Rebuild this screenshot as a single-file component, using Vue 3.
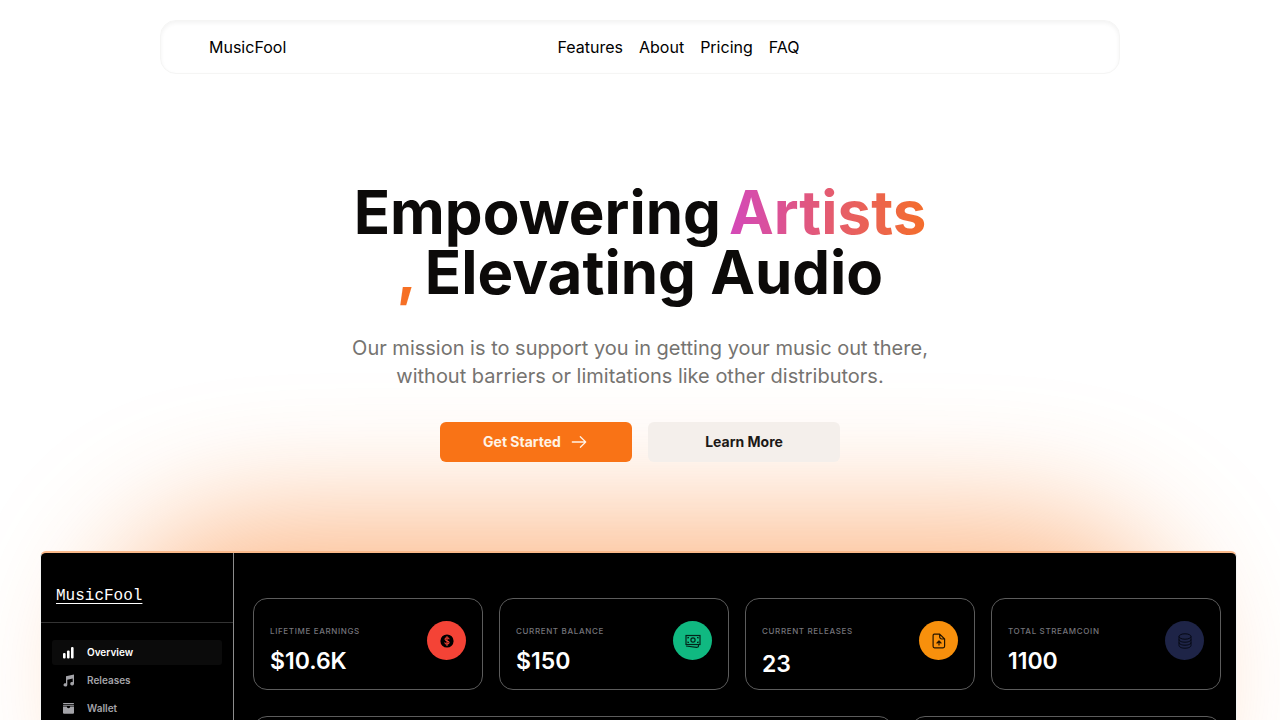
<script setup>
const links = ['Features', 'About', 'Pricing', 'FAQ']
const menu = [
  { name: 'Overview', icon: 'bars', active: true },
  { name: 'Releases', icon: 'note', active: false },
  { name: 'Wallet', icon: 'wallet', active: false },
]
const stats = [
  { label: 'Lifetime earnings', value: '$10.6K', icon: 'dollar' },
  { label: 'Current balance', value: '$150', icon: 'cash' },
  { label: 'Current releases', value: '23', icon: 'file', low: true },
  { label: 'Total streamcoin', value: '1100', icon: 'coins' },
]
</script>

<template>
  <div class="page">
    <header class="topbar">
      <a class="brand" href="#">MusicFool</a>
      <nav class="links">
        <a v-for="link in links" :key="link" :href="'#' + link.toLowerCase()">{{ link }}</a>
      </nav>
      <span class="end"></span>
    </header>

    <main>
      <section class="hero">
        <h1>Empowering<span class="accent">Artists<br />,</span>Elevating Audio</h1>
        <p>Our mission is to support you in getting your music out there, without barriers or limitations like other distributors.</p>
        <div class="actions">
          <button class="btn primary" type="button">
            Get Started
            <svg width="20" height="20" viewBox="0 0 15 15" fill="currentColor" aria-hidden="true">
              <path fill-rule="evenodd" clip-rule="evenodd" d="M8.15 3.15a.5.5 0 0 1 .7 0l4 4a.5.5 0 0 1 0 .7l-4 4a.5.5 0 0 1-.7-.7L11.29 8H2.5a.5.5 0 0 1 0-1h8.79L8.15 3.85a.5.5 0 0 1 0-.7Z" />
            </svg>
          </button>
          <button class="btn secondary" type="button">Learn More</button>
        </div>
      </section>

      <section class="preview">
        <div class="glow"></div>
        <div class="dashboard">
          <aside class="sidebar">
            <a class="logo" href="#">MusicFool</a>
            <nav class="menu">
              <a v-for="item in menu" :key="item.name" href="#" :class="{ active: item.active }">
                <svg width="13" height="13" viewBox="0 0 13 13" fill="currentColor" aria-hidden="true">
                  <template v-if="item.icon === 'bars'">
                    <rect x="1" y="7" width="2.6" height="5.5" rx="1.1" />
                    <rect x="5" y="4.5" width="2.6" height="8" rx="1.1" />
                    <rect x="9" y="1" width="2.6" height="11.5" rx="1.1" />
                  </template>
                  <template v-else-if="item.icon === 'note'">
                    <path d="M4 2.2 12 .5v9.3a1.9 1.7 0 1 1-1.3-1.7V4.5L5.3 5.7v5.2A1.9 1.7 0 1 1 4 9.3Z" />
                  </template>
                  <template v-else>
                    <rect x="1" y="1" width="11" height="1" rx=".5" />
                    <rect x="1" y="2.7" width="11" height="1" rx=".5" />
                    <path d="M1 4.6h3.8a1.7 1.7 0 0 0 3.4 0H12v6.2a1 1 0 0 1-1 1H2a1 1 0 0 1-1-1Z" />
                  </template>
                </svg>
                {{ item.name }}
              </a>
            </nav>
          </aside>

          <div class="content">
            <div class="stats">
              <article v-for="stat in stats" :key="stat.label" class="card">
                <div class="figures" :class="{ low: stat.low }">
                  <h2>{{ stat.label }}</h2>
                  <strong>{{ stat.value }}</strong>
                </div>
                <div class="badge" :class="stat.icon">
                  <svg v-if="stat.icon === 'dollar'" width="16" height="16" viewBox="0 0 16 16" fill="none" aria-hidden="true">
                    <circle cx="8" cy="8" r="6.6" fill="#000" />
                    <path d="M10 5.9C9.8 5.2 9 4.8 8 4.8c-1.2 0-2 .6-2 1.5 0 2.2 4.1 1.1 4.1 3.3 0 1-.9 1.6-2.1 1.6-1.1 0-1.9-.5-2.1-1.3M8 3.5v9" stroke="#f44336" stroke-width="1.1" stroke-linecap="round" />
                  </svg>
                  <svg v-else-if="stat.icon === 'cash'" width="16" height="16" viewBox="0 0 16 16" fill="none" stroke="#03251a" stroke-width="1.2" aria-hidden="true">
                    <rect x="1" y="2.5" width="14" height="9" />
                    <circle cx="8" cy="7" r="2.1" />
                    <path d="M3 5.5V4.5h1M12 4.5h1v1M3 8.5v1h1M12 9.5h1v-1M1 13l10.5 1.3c1 .1 2-.3 2-1.3v-1.5" />
                  </svg>
                  <svg v-else-if="stat.icon === 'file'" width="16" height="16" viewBox="0 0 16 16" fill="none" stroke="#241500" stroke-width="1.2" stroke-linejoin="round" stroke-linecap="round" aria-hidden="true">
                    <path d="M3.3 1.1h5.4l4.9 4.9v7.3c0 .9-.6 1.5-1.5 1.5H3.500c-.8 0-1.4-.6-1.4-1.5V2.4c0-.7.5-1.3 1.2-1.3ZM8.7 1.4v2.4c0 1.3.8 2.2 2.2 2.2h2.3M8 12V8.5M6 10l2-2 2 2" />
                  </svg>
                  <svg v-else width="16" height="16" viewBox="0 0 16 16" fill="none" stroke="#060914" aria-hidden="true">
                    <ellipse cx="8" cy="3.5" rx="6" ry="2.7" />
                    <path d="M2 3.5v9c0 1.5 2.7 2.7 6 2.7s6-1.2 6-2.7v-9M2 6.5c0 1.5 2.7 2.7 6 2.7s6-1.2 6-2.7M2 9.5c0 1.5 2.7 2.7 6 2.7s6-1.2 6-2.7" />
                  </svg>
                </div>
              </article>
            </div>
            <div class="panels">
              <div class="panel"></div>
              <div class="panel"></div>
            </div>
          </div>
        </div>
      </section>
    </main>
  </div>
</template>

<style>
body {
  margin: 0;
  background: #fff;
}
</style>

<style scoped>
.page {
  height: 100vh;
  overflow: hidden;
  font-family: Inter, sans-serif;
  color: #0c0a09;
}
a {
  color: inherit;
  text-decoration: none;
}
.topbar {
  box-sizing: border-box;
  width: 75%;
  min-height: 54px;
  margin: 20px auto 0;
  padding: 0 48px;
  display: grid;
  grid-template-columns: 1fr auto 1fr;
  align-items: center;
  border: 1px solid #f5f5f4;
  border-radius: 16px;
  box-shadow: inset 0 2px 4px rgba(0, 0, 0, 0.05);
  font-size: 16px;
  line-height: 24px;
  color: #000;
}
.links {
  display: flex;
  gap: 16px;
  padding-left: 77px;
}
.hero {
  position: relative;
  z-index: 1;
  display: flex;
  flex-direction: column;
  align-items: center;
  padding-top: 108px;
  text-align: center;
}
h1 {
  margin: 0;
  font-size: 60px;
  line-height: 60px;
  font-weight: 700;
}
.accent {
  padding: 0 8px;
  color: transparent;
  background: linear-gradient(to right, #d247bf, #f97316);
  background-clip: text;
  -webkit-background-clip: text;
}
.hero p {
  max-width: 600px;
  margin: 32px 0;
  font-size: 20px;
  line-height: 28px;
  color: #757370;
}
.actions {
  display: flex;
  gap: 16px;
}
.btn {
  width: 192px;
  height: 40px;
  display: flex;
  align-items: center;
  justify-content: center;
  gap: 8px;
  border: 0;
  border-radius: 6px;
  font: 700 14px/20px Inter, sans-serif;
  cursor: pointer;
}
.primary {
  background: #f97316;
  color: #fff3e6;
}
.secondary {
  background: #f4efeb;
  color: #1c1917;
}
.preview {
  position: relative;
  margin: 89px 40px 0;
}
.glow {
  position: absolute;
  top: -32px;
  left: 5%;
  width: 90%;
  height: 320px;
  border-radius: 160px;
  background: rgba(249, 115, 22, 0.5);
  filter: blur(64px);
}
.dashboard {
  position: relative;
  display: grid;
  grid-template-columns: 193px 1fr;
  min-height: 640px;
  margin-right: 3px;
  overflow: hidden;
  border: 1px solid #f5f5f4;
  border-top: 2px solid #fbb98a;
  border-radius: 6px;
  background: #000;
}
.sidebar {
  box-sizing: border-box;
  border-right: 1px solid #8c8c8c;
}
.logo {
  display: block;
  padding: 32px 15px 14px;
  border-bottom: 1px solid #333;
  font: 16px/23px "Liberation Mono", monospace;
  color: #fff;
  text-decoration: underline;
  text-underline-offset: 3px;
}
.menu {
  display: grid;
  gap: 3px;
  padding: 17px 11px;
}
.menu a {
  display: flex;
  align-items: center;
  gap: 12px;
  padding: 0 10px;
  border-radius: 3px;
  font-size: 10px;
  line-height: 25px;
  font-weight: 600;
  color: #a3a3a8;
}
.menu .active {
  background: #0b0b0b;
  color: #fff;
}
.content {
  padding: 45px 15px 0 19px;
}
.stats {
  display: grid;
  grid-template-columns: repeat(4, 1fr);
  gap: 16px;
}
.card {
  box-sizing: border-box;
  display: flex;
  justify-content: space-between;
  align-items: flex-start;
  min-height: 92px;
  padding: 22px 16px 10px;
  border: 1px solid #5c5c5c;
  border-radius: 14px;
}
.figures {
  display: grid;
  padding-top: 4px;
  gap: 10px;
}
.figures.low {
  gap: 13px;
}
h2 {
  margin: 0;
  font-size: 8px;
  line-height: 12px;
  font-weight: 500;
  letter-spacing: 0.08em;
  text-transform: uppercase;
  color: #74747a;
}
strong {
  font: 600 23px/28px Inter, sans-serif;
  color: #fff;
}
.badge {
  display: grid;
  place-items: center;
  width: 39px;
  height: 39px;
  border-radius: 50%;
}
.dollar {
  background: #f44336;
}
.cash {
  background: #10b981;
}
.file {
  background: #f8900c;
}
.coins {
  background: #1e2447;
}
.panels {
  display: grid;
  grid-template-columns: 639fr 310fr;
  gap: 18px;
  margin-top: 26px;
}
.panel {
  min-height: 300px;
  border: 1px solid #5c5c5c;
  border-radius: 14px;
}
</style>
